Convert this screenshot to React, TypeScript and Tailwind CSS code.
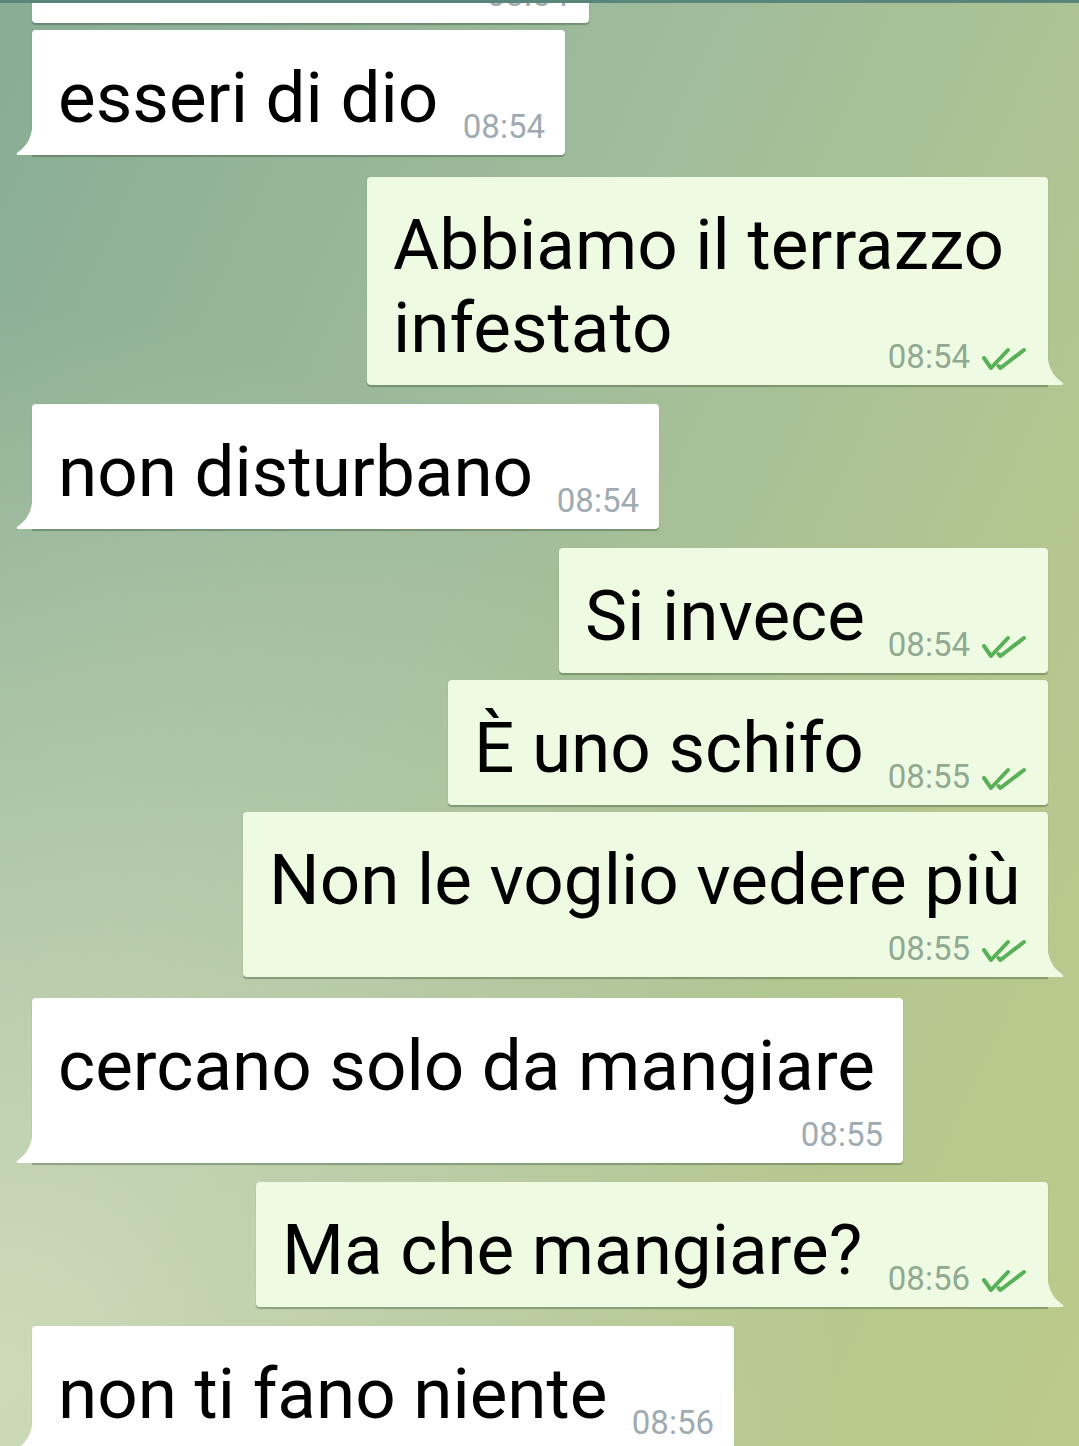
type Msg = {
  out: boolean;
  lines: string[];
  time: string;
  layout: "inline" | "below" | "wrap";
  width: number;
  gap: number;
  tail: boolean;
};

const messages: Msg[] = [
  { out: false, lines: ["esseri di dio"], time: "08:54", layout: "inline", width: 533, gap: 7, tail: true },
  { out: true, lines: ["Abbiamo il terrazzo", "infestato"], time: "08:54", layout: "wrap", width: 681, gap: 22, tail: true },
  { out: false, lines: ["non disturbano"], time: "08:54", layout: "inline", width: 627, gap: 19, tail: true },
  { out: true, lines: ["Si invece"], time: "08:54", layout: "inline", width: 489, gap: 19, tail: false },
  { out: true, lines: ["È uno schifo"], time: "08:55", layout: "inline", width: 600, gap: 7, tail: false },
  { out: true, lines: ["Non le voglio vedere più"], time: "08:55", layout: "below", width: 805, gap: 7, tail: true },
  { out: false, lines: ["cercano solo da mangiare"], time: "08:55", layout: "below", width: 871, gap: 21, tail: true },
  { out: true, lines: ["Ma che mangiare?"], time: "08:56", layout: "inline", width: 792, gap: 19, tail: true },
  { out: false, lines: ["non ti fano niente"], time: "08:56", layout: "inline", width: 702, gap: 19, tail: true },
];

function Checks() {
  return (
    <svg width="48" height="26" viewBox="0 0 48 26" fill="none" className="ml-[10px] mb-[2px]">
      <path d="M4 11 L11 21 L28 3" stroke="#58b058" strokeWidth="4" strokeLinecap="round" strokeLinejoin="round" />
      <path d="M18.5 19 L20.5 21 L44 3" stroke="#58b058" strokeWidth="4" strokeLinecap="round" strokeLinejoin="round" />
    </svg>
  );
}

function Time({ msg }: { msg: Msg }) {
  return (
    <div className="flex shrink-0 items-end">
      <span className={`text-[33px] leading-[36px] ${msg.out ? "text-[#91a991]" : "text-[#a0abb1]"}`}>{msg.time}</span>
      {msg.out && <Checks />}
    </div>
  );
}

function Tail({ out, color }: { out: boolean; color: string }) {
  return (
    <svg
      width="17"
      height="34"
      viewBox="0 0 17 34"
      className={`absolute bottom-0 ${out ? "right-[-16px] -scale-x-100" : "left-[-16px]"}`}
    >
      <path d="M17 0 L17 34 L2 34 Q-0.5 33.5 1.5 31.5 C9 26 16.5 19 16.5 0 Z" fill={color} />
    </svg>
  );
}

function Bubble({ msg }: { msg: Msg }) {
  const bg = msg.out ? "#eefbe2" : "#ffffff";
  return (
    <div
      className={`relative pl-[26px] pr-[20px] pt-[26px] pb-[10px] rounded-[4px] shadow-[0_1.5px_1px_rgba(40,70,40,0.35)] ${
        msg.out ? "bg-[#eefbe2]" : "bg-white"
      } ${msg.tail ? (msg.out ? "rounded-br-none" : "rounded-bl-none") : ""}`}
      style={{ width: msg.width }}
    >
      {msg.layout === "inline" && (
        <div className="flex items-end justify-between">
          <div className="mb-[6px] whitespace-nowrap text-[71px] leading-[83px] text-black">{msg.lines[0]}</div>
          <Time msg={msg} />
        </div>
      )}
      {msg.layout === "below" && (
        <div>
          <div className="whitespace-nowrap text-[71px] leading-[83px] text-black">{msg.lines[0]}</div>
          <div className="mt-[10px] flex justify-end">
            <Time msg={msg} />
          </div>
        </div>
      )}
      {msg.layout === "wrap" && (
        <div>
          <div className="text-[71px] leading-[83px] text-black">
            {msg.lines.map((l) => (
              <div key={l} className="whitespace-nowrap">{l}</div>
            ))}
          </div>
          <div className="-mt-[30px] flex justify-end">
            <Time msg={msg} />
          </div>
        </div>
      )}
      {msg.tail && <Tail out={msg.out} color={bg} />}
    </div>
  );
}

export default function App() {
  return (
    <div
      className="relative h-[1446px] w-full overflow-hidden bg-[radial-gradient(ellipse_at_0%_95%,rgba(214,224,190,0.85),rgba(214,224,190,0)_55%),linear-gradient(115deg,#88ad95_0%,#a0bc9b_40%,#b4c790_75%,#bccb8a_100%)]"
      style={{ fontFamily: "Roboto, 'Noto Sans', sans-serif" }}
    >
      <div className="absolute left-0 right-0 top-0 z-10 h-[3px] bg-[#5a857b]" />

      <div className="flex flex-col">
        {/* partly scrolled-off bubble */}
        <div className="ml-[32px] -mt-[102px]">
          <div className="relative w-[557px] rounded-[4px] bg-white pl-[26px] pr-[20px] pt-[26px] pb-[10px] shadow-[0_1.5px_1px_rgba(40,70,40,0.35)]">
            <div className="flex items-end justify-between">
              <div className="mb-[6px] text-[71px] leading-[83px] text-black">&nbsp;</div>
              <span className="text-[33px] leading-[36px] text-[#a0abb1]">08:54</span>
            </div>
          </div>
        </div>

        {messages.map((m, i) => (
          <div
            key={i}
            className={`flex ${m.out ? "justify-end pr-[31px]" : "justify-start pl-[32px]"}`}
            style={{ marginTop: m.gap }}
          >
            <Bubble msg={m} />
          </div>
        ))}
      </div>
    </div>
  );
}
